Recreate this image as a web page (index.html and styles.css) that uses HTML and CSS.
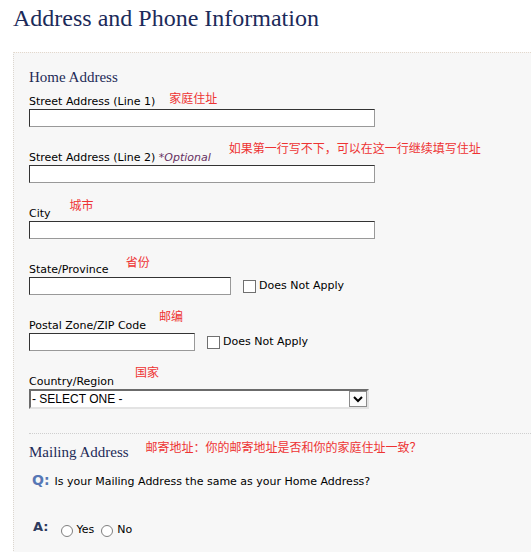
FILE: index.html
```html
<!DOCTYPE html>
<html lang="en">
<head>
    <meta charset="UTF-8">
    <meta name="viewport" content="width=device-width, initial-scale=1.0">
    <title>Address and Phone Information</title>
    <link rel="stylesheet" href="styles.css">
</head>
<body>

<h1 class="page-title">Address and Phone Information</h1>

<div class="panel">
    <h2 class="section-title">Home Address</h2>

    <div class="field">
        <label class="field-label">Street Address (Line 1)<span class="note note-line1">家庭住址</span></label>
        <input class="text-input wide" type="text">
    </div>

    <div class="field">
        <label class="field-label">Street Address (Line 2) <em class="optional">*Optional</em><span class="note note-line2">如果第一行写不下，可以在这一行继续填写住址</span></label>
        <input class="text-input wide" type="text">
    </div>

    <div class="field">
        <label class="field-label">City<span class="note note-city">城市</span></label>
        <input class="text-input wide" type="text">
    </div>

    <div class="field">
        <label class="field-label">State/Province<span class="note note-state">省份</span></label>
        <div class="input-row">
            <input class="text-input medium" type="text">
            <label class="na-check"><input type="checkbox">Does Not Apply</label>
        </div>
    </div>

    <div class="field">
        <label class="field-label">Postal Zone/ZIP Code<span class="note note-postal">邮编</span></label>
        <div class="input-row">
            <input class="text-input short" type="text">
            <label class="na-check"><input type="checkbox">Does Not Apply</label>
        </div>
    </div>

    <div class="field">
        <label class="field-label">Country/Region<span class="note note-country">国家</span></label>
        <div class="select-wrap">
            <select class="select-box">
                <option>- SELECT ONE -</option>
            </select>
            <span class="select-arrow">
                <svg width="10" height="7" viewBox="0 0 10 7"><polyline points="1,1 5,5 9,1" fill="none" stroke="#000" stroke-width="2"/></svg>
            </span>
        </div>
    </div>

    <!-- Mailing address -->
    <div class="mailing">
        <h2 class="section-title">Mailing Address<span class="note note-mailing">邮寄地址：你的邮寄地址是否和你的家庭住址一致？</span></h2>

        <div class="qa-row question">
            <span class="q-mark">Q:</span>
            <span class="qa-text">Is your Mailing Address the same as your Home Address?</span>
        </div>

        <div class="qa-row answer">
            <span class="a-mark">A:</span>
            <label class="radio-opt"><input type="radio" name="same-address">Yes</label>
            <label class="radio-opt"><input type="radio" name="same-address">No</label>
        </div>
    </div>
</div>

</body>
</html>
```

FILE: styles.css
```css
body {
    margin: 0;
    padding: 0;
    background: #fff;
    color: #000;
    font-family: "DejaVu Sans", Verdana, sans-serif;
    font-size: 11px;
}

.page-title {
    margin: 4px 0 20px 13px;
    font-family: "Liberation Serif", "Times New Roman", serif;
    font-size: 24px;
    font-weight: normal;
    line-height: 28px;
    color: #1b2a5a;
}

.panel {
    margin-left: 13px;
    padding: 15px 0 40px 15px;
    background: #f7f7f7;
    border-top: 1px dotted #e3d8cc;
    border-left: 1px dotted #dcd7d0;
}

.section-title {
    margin: 0 0 9px;
    font-family: "Liberation Serif", "Times New Roman", serif;
    font-size: 15px;
    font-weight: normal;
    line-height: 18px;
    color: #1e2b57;
    white-space: nowrap;
}

.field {
    margin-bottom: 24px;
}

.field-label {
    display: block;
    line-height: 13px;
    white-space: nowrap;
}

.optional {
    color: #66305f;
}

/* red notes written over the form */
.note {
    position: relative;
    font-family: "Noto Sans CJK SC", sans-serif;
    font-size: 12px;
    font-style: normal;
    line-height: 0;
    color: #ee3333;
}

.note-line1 { margin-left: 14px; top: -2px; }
.note-line2 { margin-left: 18px; top: -8px; }
.note-city { margin-left: 19px; top: -7px; }
.note-state { margin-left: 17px; top: -6px; }
.note-postal { margin-left: 13px; top: -8px; }
.note-country { margin-left: 21px; top: -8px; }
.note-mailing { margin-left: 17px; top: -5px; }

.text-input {
    display: block;
    box-sizing: border-box;
    height: 18px;
    margin: 1px 0 0;
    padding: 0 2px;
    border: 1px solid;
    border-color: #333 #999 #999 #333;
    background: #fff;
    font-family: "DejaVu Sans", Verdana, sans-serif;
    font-size: 11px;
}

.text-input.wide {
    width: 346px;
}

.text-input.medium {
    width: 202px;
}

.text-input.short {
    width: 166px;
}

.input-row {
    display: flex;
    align-items: center;
}

.input-row .text-input {
    margin-top: 1px;
}

.na-check {
    display: flex;
    align-items: center;
    margin-left: 12px;
    line-height: 13px;
}

.na-check input {
    appearance: none;
    width: 13px;
    height: 13px;
    margin: 2px 3px 0 0;
    border: 1px solid #707070;
    background: #fff;
}

.select-wrap {
    position: relative;
    width: 340px;
    height: 20px;
    margin-top: 1px;
}

.select-box {
    appearance: none;
    display: block;
    box-sizing: border-box;
    width: 100%;
    height: 20px;
    margin: 0;
    padding: 0 0 0 1px;
    border: 2px solid;
    border-color: #6b6b6b #e3e3e3 #e3e3e3 #6b6b6b;
    border-radius: 0;
    background: #fff;
    color: #000;
    font-family: "Liberation Sans", Arial, sans-serif;
    font-size: 12px;
}

.select-arrow {
    position: absolute;
    top: 2px;
    right: 2px;
    box-sizing: border-box;
    width: 18px;
    height: 16px;
    border: 1px solid #8c8c8c;
    background: #fbfbfb;
    display: flex;
    align-items: center;
    justify-content: center;
}

.mailing {
    border-top: 1px dotted #cfcfcf;
    padding-top: 9px;
}

.qa-row {
    display: flex;
}

.question {
    align-items: baseline;
    margin-top: 11px;
    padding-left: 3px;
}

.q-mark {
    font-size: 14px;
    font-weight: bold;
    line-height: 17px;
    color: #5677b5;
}

.qa-text {
    margin-left: 5px;
    line-height: 13px;
}

.answer {
    align-items: flex-start;
    margin-top: 30px;
    padding-left: 4px;
}

.a-mark {
    margin-right: 12px;
    font-size: 13px;
    font-weight: bold;
    line-height: 16px;
    color: #2e3b5e;
}

.radio-opt {
    display: flex;
    align-items: center;
    margin: 2px 7px 0 0;
    line-height: 13px;
}

.radio-opt input {
    appearance: none;
    width: 12px;
    height: 12px;
    margin: 4px 4px 0 0;
    border: 1px solid #808080;
    border-radius: 50%;
    background: #fff;
}
```
